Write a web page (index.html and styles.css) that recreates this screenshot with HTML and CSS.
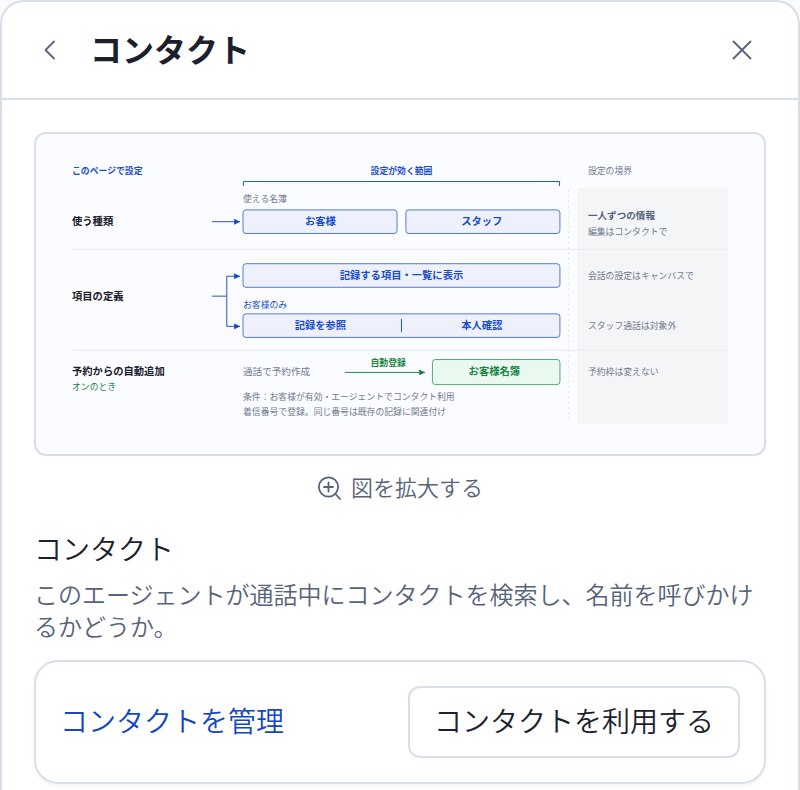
FILE: index.html
```html
<!DOCTYPE html>
<html lang="ja">

<head>
    <meta charset="utf-8" />
    <meta name="viewport" content="width=device-width, initial-scale=1.0" />
    <title>コンタクト</title>
    <link rel="stylesheet" href="styles.css">
</head>

<body>
    <div class="panel">
        <header class="panel-header">
            <button type="button" class="icon-button" aria-label="戻る">
                <svg width="24" height="24" viewBox="0 0 24 24" class="icon">
                    <path d="M16 3.5 7.5 12l8.5 8.5" />
                </svg>
            </button>
            <h1 class="panel-title">コンタクト</h1>
            <button type="button" class="icon-button" aria-label="閉じる">
                <svg width="24" height="24" viewBox="0 0 24 24" class="icon">
                    <path d="M3.5 3.5l17 17M20.5 3.5l-17 17" />
                </svg>
            </button>
        </header>

        <main class="panel-body">
            <figure class="figure">
                <svg class="diagram" viewBox="0 0 890 358" role="img" aria-label="コンタクト設定の範囲">
                    <defs>
                        <marker id="head-blue" viewBox="0 0 8 8" refX="8" refY="4" markerWidth="8" markerHeight="8"
                            markerUnits="userSpaceOnUse" orient="auto">
                            <path d="M0 0l8 4-8 4z" class="head-blue" />
                        </marker>
                        <marker id="head-green" viewBox="0 0 8 8" refX="8" refY="4" markerWidth="8" markerHeight="8"
                            markerUnits="userSpaceOnUse" orient="auto">
                            <path d="M0 0l8 4-8 4z" class="head-green" />
                        </marker>
                    </defs>

                    <!-- 設定の境界 -->
                    <rect x="686" y="35" width="204" height="320" rx="3" class="zone" />
                    <path d="M673.5 38V350" class="boundary" />
                    <path d="M0 118.5H890M0 255.5H890" class="divider" />

                    <!-- 見出し -->
                    <text x="0" y="16" class="label blue bold">このページで設定</text>
                    <text x="447" y="16" class="label blue bold middle">設定が効く範囲</text>
                    <text x="700" y="16" class="label muted">設定の境界</text>
                    <path d="M232.5 32.5V26.5H661.5V32.5" class="line" />

                    <!-- 使う種類 -->
                    <text x="0" y="85" class="name dark">使う種類</text>
                    <text x="232" y="54" class="label muted">使える名簿</text>
                    <path d="M190 81H228" class="line arrow" />
                    <rect x="232" y="65" width="209" height="32" rx="4" class="box" />
                    <rect x="453" y="65" width="209" height="32" rx="4" class="box" />
                    <text x="337" y="86" class="name blue middle">お客様</text>
                    <text x="556" y="86" class="name blue middle">スタッフ</text>
                    <text x="700" y="78" class="note slate bold">一人ずつの情報</text>
                    <text x="700" y="99" class="label muted">編集はコンタクトで</text>

                    <!-- 項目の定義 -->
                    <text x="0" y="187" class="name dark">項目の定義</text>
                    <path d="M190 182H210" class="line" />
                    <path d="M210 182V155H228" class="line arrow" />
                    <path d="M210 182V223H228" class="line arrow" />
                    <rect x="232" y="138" width="430" height="32" rx="4" class="box" />
                    <text x="447" y="159" class="name blue middle">記録する項目・一覧に表示</text>
                    <text x="232" y="198" class="label blue">お客様のみ</text>
                    <rect x="232" y="206" width="430" height="32" rx="4" class="box" />
                    <path d="M447 213V231" class="line" />
                    <text x="337" y="227" class="name blue middle">記録を参照</text>
                    <text x="556" y="227" class="name blue middle">本人確認</text>
                    <text x="700" y="159" class="label muted">会話の設定はキャンバスで</text>
                    <text x="700" y="227" class="label muted">スタッフ通話は対象外</text>

                    <!-- 予約からの自動追加 -->
                    <text x="0" y="289" class="name dark">予約からの自動追加</text>
                    <text x="0" y="309" class="label green">オンのとき</text>
                    <text x="232" y="289" class="note muted">通話で予約作成</text>
                    <text x="429" y="277" class="label green bold middle">自動登録</text>
                    <path d="M370 285.5H479" class="line-green" />
                    <rect x="489" y="268" width="173" height="34" rx="4" class="box-green" />
                    <text x="573" y="289" class="name green middle">お客様名簿</text>
                    <text x="232" y="323" class="label muted">条件：お客様が有効・エージェントでコンタクト利用</text>
                    <text x="232" y="343" class="label muted">着信番号で登録。同じ番号は既存の記録に関連付け</text>
                    <text x="700" y="289" class="label muted">予約枠は変えない</text>
                </svg>
            </figure>

            <button type="button" class="zoom-button">
                <svg width="24" height="24" viewBox="0 0 24 24" class="icon">
                    <circle cx="11.5" cy="11" r="9.6" />
                    <path d="M18.500 18l4.500 5M11.500 6.500v9M7 11h9" />
                </svg>
                <span class="zoom-text">図を拡大する</span>
            </button>

            <section class="section">
                <h2 class="section-title">コンタクト</h2>
                <p class="section-text">このエージェントが通話中にコンタクトを検索し、名前を呼びかけるかどうか。</p>
                <div class="card">
                    <a href="#contacts" class="card-link">コンタクトを管理</a>
                    <button type="button" class="card-button">コンタクトを利用する</button>
                </div>
            </section>
        </main>
    </div>
</body>

</html>
```

FILE: styles.css
```css
* {
    box-sizing: border-box;
}

body {
    margin: 0;
    font-family: "Noto Sans CJK JP", sans-serif;
    font-weight: 350;
    background-color: #f8fafc;
    color: #1c202d;
}

button {
    font-family: inherit;
    font-weight: inherit;
    background: none;
    border: none;
    padding: 0;
    cursor: pointer;
}

.panel {
    min-height: 100vh;
    background: #fff;
    border: 2px solid #d9dfe9;
    border-bottom: none;
    border-radius: 24px 24px 0 0;
}

/* ヘッダー */
.panel-header {
    display: flex;
    align-items: center;
    gap: 16px;
    height: 98px;
    padding: 0 32px 0 24px;
    border-bottom: 2px solid #d9dfe9;
}

.panel-title {
    flex: 1;
    margin: 0;
    padding-bottom: 4px;
    font-size: 32px;
    line-height: 48px;
    font-weight: 700;
}

.icon-button {
    display: flex;
    align-items: center;
    justify-content: center;
    width: 48px;
    height: 48px;
    color: #56637a;
}

.icon {
    fill: none;
    stroke: currentColor;
    stroke-width: 1.8;
    stroke-linecap: round;
    stroke-linejoin: round;
}

.panel-body {
    display: flex;
    flex-direction: column;
    padding: 32px 32px 0;
}

/* 設定の図 */
.figure {
    margin: 0;
    padding: 28px 36px;
    background: #fbfcff;
    border: 2px solid #d9dfe9;
    border-radius: 12px;
}

.diagram {
    display: block;
    width: 100%;
    font-weight: 400;
}

.label {
    font-size: 12px;
}

.note {
    font-size: 13px;
}

.name {
    font-size: 14px;
    font-weight: 700;
}

.bold {
    font-weight: 700;
}

.middle {
    text-anchor: middle;
}

.dark {
    fill: #1c202d;
}

.blue {
    fill: #1a4dcb;
}

.green {
    fill: #1b8544;
}

.muted {
    fill: #6f7b8f;
}

.slate {
    fill: #56637a;
}

.zone {
    fill: #f4f5f7;
}

.boundary {
    fill: none;
    stroke: #d9dfe9;
    stroke-dasharray: 3 4;
}

.divider {
    stroke: #dfe4eb;
}

.line {
    fill: none;
    stroke: #1a4dcb;
    stroke-width: 1.3;
}

.arrow {
    marker-end: url(#head-blue);
}

.line-green {
    stroke: #1b8544;
    stroke-width: 1.3;
    marker-end: url(#head-green);
}

.head-blue {
    fill: #1447c4;
}

.head-green {
    fill: #15803d;
}

.box {
    fill: #eef1fb;
    stroke: #4d75d6;
    stroke-width: 1.3;
}

.box-green {
    fill: #e9f9f0;
    stroke: #4ea46f;
    stroke-width: 1.3;
}

.zoom-button {
    display: flex;
    align-items: center;
    align-self: center;
    gap: 10px;
    margin-top: 16px;
    font-size: 22px;
    line-height: 28px;
    color: #56637a;
}

.zoom-text {
    padding-bottom: 4px;
}

/* コンタクト設定 */
.section {
    margin-top: 24px;
}

.section-title {
    margin: 0;
    font-size: 28px;
    line-height: 40px;
    font-weight: inherit;
}

.section-text {
    margin: 10px 0 18px;
    font-size: 24px;
    line-height: 32px;
    color: #56637a;
}

.card {
    display: flex;
    align-items: center;
    justify-content: space-between;
    padding: 24px;
    border: 2px solid #d9dfe9;
    border-radius: 24px;
    box-shadow: 0 2px 4px rgba(0, 0, 0, 0.05);
}

.card-link {
    padding-bottom: 4px;
    font-size: 28px;
    line-height: 40px;
    color: #1447c4;
    text-decoration: none;
}

.card-button {
    padding: 12px 24px 16px;
    font-size: 28px;
    line-height: 40px;
    color: #1c202d;
    background: #fff;
    border: 2px solid #d9dfe9;
    border-radius: 12px;
}
```
